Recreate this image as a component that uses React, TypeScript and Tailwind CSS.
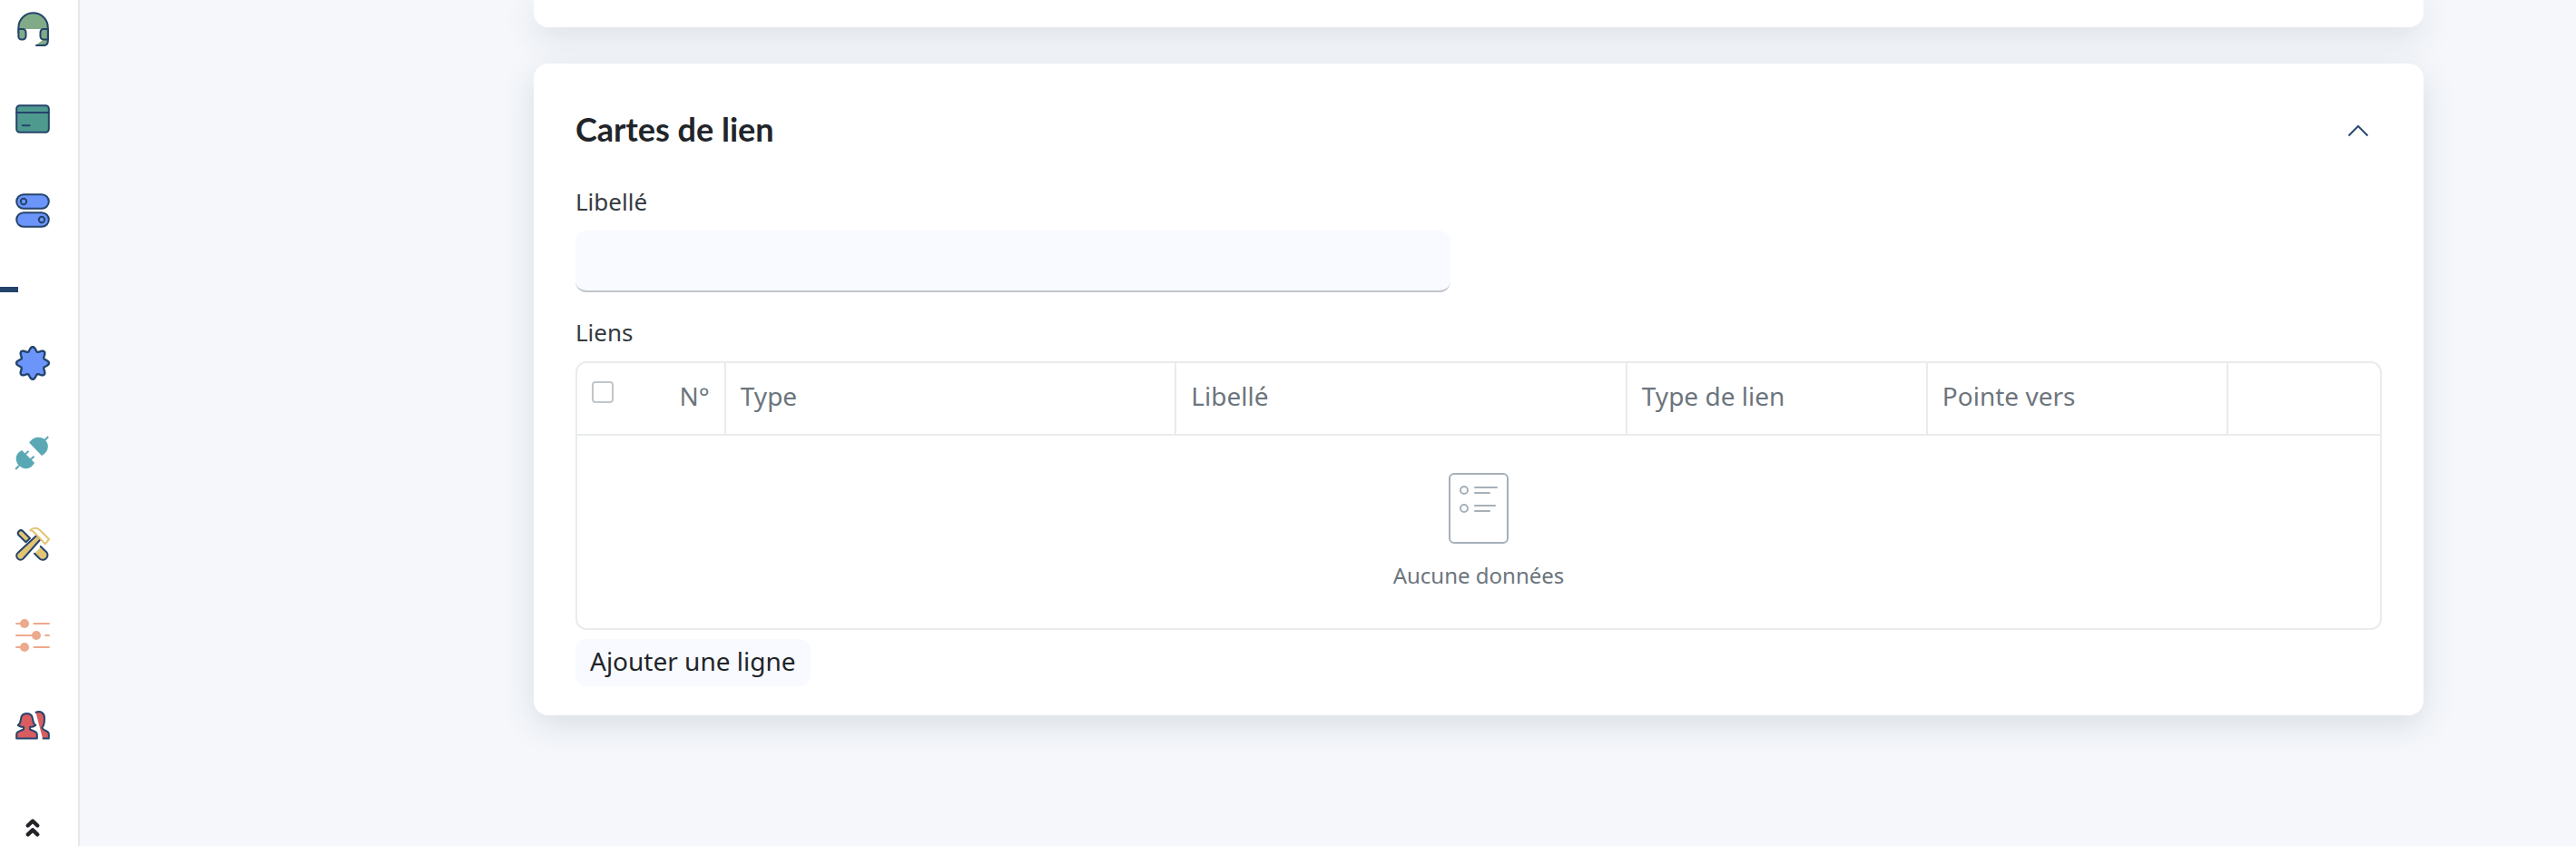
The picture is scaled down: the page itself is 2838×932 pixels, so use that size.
import { useState, type ReactNode } from "react";

const NAVY = "#24446b";

function gearPath() {
  const points: string[] = [];
  for (let i = 0; i < 160; i++) {
    const t = (i / 160) * Math.PI * 2;
    const r = 15.6 + 2.3 * Math.cos(8 * t);
    points.push(`${(20 + r * Math.cos(t)).toFixed(2)} ${(20 + r * Math.sin(t)).toFixed(2)}`);
  }
  return `M${points.join("L")}Z`;
}

function Icon({ children }: { children: ReactNode }) {
  return (
    <svg viewBox="0 0 40 40" className="size-10" fill="none" strokeLinecap="round" strokeLinejoin="round" strokeWidth="2" aria-hidden="true">
      {children}
    </svg>
  );
}

const SupportIcon = (
  <Icon>
    <path d="M4.4 20V18.4a16.2 16.2 0 0 1 32.4 0V20Z" fill="#80ab86" />
    <path d="M23 38 32 31.5 37 31v3a4 4 0 0 1-4 4Z" fill="#80ab86" />
    <path d="M4.4 24V18.4a16.2 16.2 0 0 1 32.4 0V33.5a4.4 4.4 0 0 1-4.4 4.5H24" stroke={NAVY} />
    <path d="M4.4 20H9a3.5 3.5 0 0 1 3.5 3.5v4.5A3.5 3.5 0 0 1 9 31.5H7.5A3.1 3.1 0 0 1 4.4 28.4Z" fill="#80ab86" stroke={NAVY} />
    <path d="M36.8 20H32a3.5 3.5 0 0 0-3.5 3.5v4.5a3.5 3.5 0 0 0 3.5 3.5h4.8Z" fill="#80ab86" stroke={NAVY} />
  </Icon>
);

const CardIcon = (
  <Icon>
    <rect x="2.2" y="4.2" width="35.6" height="29.6" rx="3.5" fill="#4f9a8f" stroke={NAVY} />
    <path d="M2.2 12H37.8M8.7 26.200H16.7" stroke={NAVY} />
  </Icon>
);

const TogglesIcon = (
  <Icon>
    <rect x="2.2" y="2.2" width="35.6" height="15.6" rx="7.8" fill="#6b95fb" stroke={NAVY} />
    <rect x="2.2" y="22.2" width="35.6" height="15.6" rx="7.8" fill="#6b95fb" stroke={NAVY} />
    <circle cx="10" cy="10" r="3.2" stroke={NAVY} />
    <circle cx="30" cy="30" r="3.2" stroke={NAVY} />
  </Icon>
);

const GearIcon = (
  <Icon>
    <path d={gearPath()} fill="#6b95fb" stroke={NAVY} strokeWidth="2.4" />
  </Icon>
);

const PlugIcon = (
  <Icon>
    <path d="M16.2 7.8C20 1 29 0 33.7 4.5C39 10 37.5 18 30 21.9Z" fill="#5ba8b5" />
    <path d="M8 16C0 20 .5 28 4.5 32.5C10 38 18 37.5 22 29.7Z" fill="#5ba8b5" />
    <path d="M33 5.2 37.2 1M5 33 1.2 37M11.5 20.8 15.5 16.9M17.5 26.5 21.5 22.7" stroke="#5ba8b5" strokeLinecap="butt" />
  </Icon>
);

const ToolsIcon = (
  <Icon>
    <path d="M9.3 5.2a3.2 3.2 0 0 0-4.5 0 3.2 3.2 0 0 0 0 4.5L12.5 17.3 17 13Z" fill="#e2c474" stroke={NAVY} />
    <path d="M24.5 9.7 28.7 14 10 35a4.2 4.2 0 0 1-6.5.3 4.2 4.2 0 0 1 .2-6.3Z" fill="#e2c474" stroke={NAVY} />
    <path d="M17.2 4C21 1 25 1.2 28 4L38 14 33.7 19.3 24.5 9.5C22 6.5 20 4.6 17.2 4Z" fill="#fff" stroke="#e2c474" />
    <path d="M22 29.7 28.7 23 35.5 29.5A5.5 5.5 0 0 1 28.5 36.5Z" fill="#e2c474" />
    <path d="M22 29.7 28 35.7A5.3 5.3 0 0 0 35.5 28.5L28.7 22" stroke={NAVY} />
  </Icon>
);

const SlidersIcon = (
  <Icon>
    <path d="M1.3 7H11M20.7 7H38.7M1.3 20H24M33.3 20H38.7M1.3 33H11M20.7 33H38.7" stroke="#eda98c" strokeLinecap="butt" />
    <g fill="#eda98c">
      <circle cx="11" cy="7" r="5" />
      <circle cx="24" cy="20" r="5" />
      <circle cx="11" cy="33" r="5" />
    </g>
  </Icon>
);

const PeopleIcon = (
  <Icon>
    <path d="M13.5 6C9 6 7 9 6.8 13C6.6 16 5.5 17.7 3.7 19C5.5 20.5 7.7 21 10 21V23.5L4 26.2C2.8 26.8 2.2 27.5 2.2 29V33.5H24.8V29C24.8 27.5 24.2 26.8 23 26.2L17 23.5V21C19.3 21 21.5 20.5 23.3 19C21.5 17.7 20.4 16 20.2 13C20 9 18 6 13.5 6Z" fill="#d95c60" stroke={NAVY} />
    <path d="M23.5 5C29 2.5 33 6 33 11C33 16 32.5 19.5 30.5 21.3C30.5 23.5 32 24 34.5 25C37 26 37.8 27 37.8 29V33.5H31Z" fill="#d95c60" />
    <path d="M23.5 4.7C29 2.5 33 6 33 11C33 16 32.5 19.5 30.5 21.3C30.5 23.5 32 24 34.5 25C37 26 37.8 27 37.8 29V33.5H31.5" stroke={NAVY} />
  </Icon>
);

function NavItem({ label, icon }: { label: string; icon: ReactNode }) {
  return (
    <a href="#" aria-label={label} className="flex h-[100px] items-center pl-4">
      {icon}
    </a>
  );
}

function Sidebar() {
  return (
    <nav className="flex w-[88px] shrink-0 flex-col border-r-2 border-[#e6e8ee] bg-white">
      <div className="-mt-[18px]">
        <NavItem label="Support" icon={SupportIcon} />
        <NavItem label="Cartes" icon={CardIcon} />
        <NavItem label="Options" icon={TogglesIcon} />
      </div>
      <div className="flex h-[68px] items-center pt-1.5">
        <div className="h-1.5 w-5 bg-[#24446b]" />
      </div>
      <NavItem label="Paramètres" icon={GearIcon} />
      <NavItem label="Extensions" icon={PlugIcon} />
      <NavItem label="Outils" icon={ToolsIcon} />
      <NavItem label="Réglages" icon={SlidersIcon} />
      <NavItem label="Utilisateurs" icon={PeopleIcon} />
      <button type="button" aria-label="Remonter" className="flex h-20 items-end pl-4">
        <svg viewBox="0 0 40 40" className="size-10" fill="none" stroke="#212529" strokeWidth="4.4" strokeLinecap="round" strokeLinejoin="round" aria-hidden="true">
          <path d="M14.7 19.5 20 14.5 25.3 19.5M14.7 29.3 20 24.3 25.3 29.3" />
        </svg>
      </button>
    </nav>
  );
}

function EmptyIcon() {
  return (
    <svg viewBox="0 0 66 78" className="h-[78px] w-[66px]" fill="none" stroke="#a6b0b9" strokeWidth="2" strokeLinecap="round" aria-hidden="true">
      <rect x="1" y="1" width="64" height="76" rx="5" />
      <circle cx="17" cy="19" r="4" />
      <circle cx="17" cy="39" r="4" />
      <path d="M29 16H53M29 22H45M29 36H51M29 42H45" />
    </svg>
  );
}

const columns = ["Type", "Libellé", "Type de lien", "Pointe vers"];

const cardClass = "rounded-2xl bg-white px-[46px] shadow-[0_10px_36px_0_rgba(33,60,70,0.13)]";

export default function App() {
  const [open, setOpen] = useState(true);
  const [libelle, setLibelle] = useState("");

  return (
    <div className="flex min-h-screen overflow-hidden bg-[#f5f7fb] font-['Noto_Sans',sans-serif] text-[#212529]">
      <Sidebar />
      <main className="flex min-w-0 flex-1 flex-col gap-10 pr-[168px] pl-[500px]">
        <section className={`${cardClass} h-[30px] rounded-t-none`} />

        <section className={`${cardClass} pt-11 pb-8`}>
          <header className="flex h-14 justify-between">
            <h2 className="font-[Lato,sans-serif] text-4xl leading-[56px] font-bold">Cartes de lien</h2>
            <button type="button" aria-label="Replier" aria-expanded={open} onClick={() => setOpen(!open)} className="flex size-13 items-center justify-center self-end">
              <svg viewBox="0 0 24 24" className="size-6" fill="none" stroke="#2c4a72" strokeWidth="2" aria-hidden="true">
                <path d="M1.5 17.5 12 7 22.5 17.5" />
              </svg>
            </button>
          </header>

          {open && (
            <>
              <div className="mt-8 grid grid-cols-2 gap-[62px]">
                <div className="flex flex-col">
                  <label htmlFor="libelle" className="text-[26px] leading-10 text-[#343a40]">
                    Libellé
                  </label>
                  <input
                    id="libelle"
                    value={libelle}
                    onChange={(e) => setLibelle(e.target.value)}
                    className="mt-3 h-[68px] w-full rounded-xl border-b-2 border-[#c1c6cb] bg-[#f8faff] px-4 text-[28px] outline-none"
                  />
                </div>
              </div>

              <h3 className="mt-6 text-[26px] leading-10 text-[#343a40]">Liens</h3>
              <div className="mt-3 overflow-hidden rounded-xl border-2 border-[#e9ebed]">
                <table className="w-full table-fixed border-separate border-spacing-0 text-left text-[28px] leading-10 text-[#6c757d]">
                  <colgroup>
                    <col className="w-[8.25%]" />
                    <col className="w-3/12" />
                    <col className="w-3/12" />
                    <col className="w-2/12" />
                    <col className="w-2/12" />
                    <col />
                  </colgroup>
                  <thead>
                    <tr className="h-20">
                      <th className="border-r-2 border-b-2 border-[#e9ebed] px-4 pt-0 pb-1.5 font-normal">
                        <div className="flex items-center justify-between">
                          <input type="checkbox" aria-label="Tout sélectionner" className="mb-2 size-6 appearance-none rounded-sm border-2 border-[#c1c6cb] bg-white" />
                          <span>N°</span>
                        </div>
                      </th>
                      {columns.map((name) => (
                        <th key={name} className="border-r-2 border-b-2 border-[#e9ebed] px-4 pt-0 pb-1.5 font-normal">
                          {name}
                        </th>
                      ))}
                      <th aria-label="Actions" className="border-b-2 border-[#e9ebed]" />
                    </tr>
                  </thead>
                  <tbody>
                    <tr>
                      <td colSpan={6} className="px-4 pt-[41px] pb-[39px]">
                        <div className="flex flex-col items-center gap-4">
                          <EmptyIcon />
                          <span className="text-2xl leading-[38px]">Aucune données</span>
                        </div>
                      </td>
                    </tr>
                  </tbody>
                </table>
              </div>

              <button type="button" className="mt-2.5 flex h-13 items-start rounded-xl bg-[#f8faff] px-4 pt-1 text-[28px] leading-10">
                Ajouter une ligne
              </button>
            </>
          )}
        </section>
      </main>
    </div>
  );
}
